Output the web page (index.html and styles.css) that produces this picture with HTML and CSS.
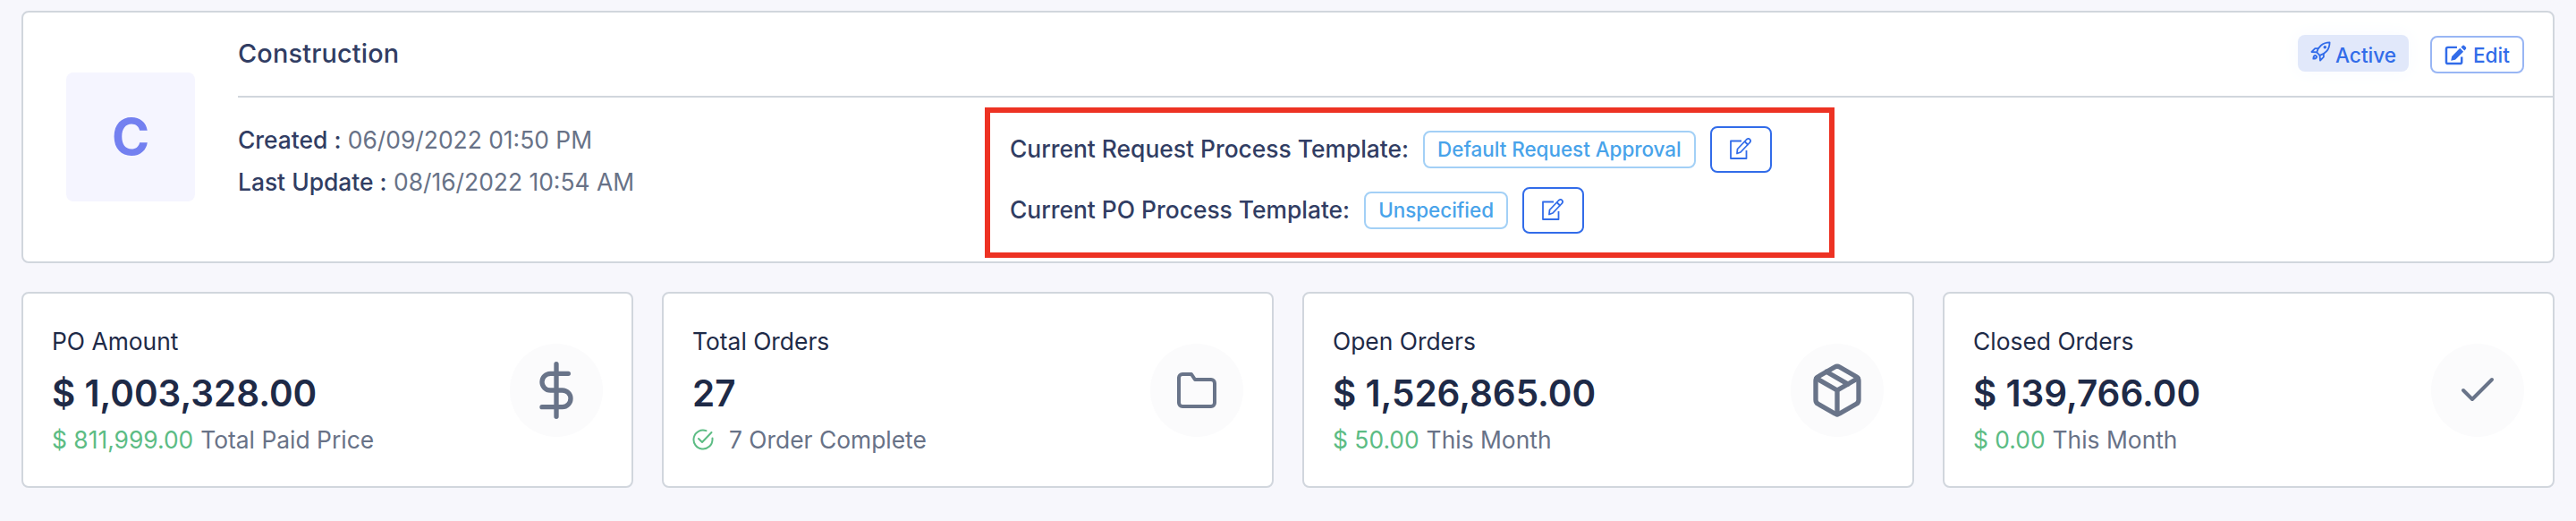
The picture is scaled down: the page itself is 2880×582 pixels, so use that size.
FILE: index.html
```html
<!DOCTYPE html>
<html lang="en">
<head>
  <meta charset="UTF-8" />
  <meta name="viewport" content="width=device-width, initial-scale=1.0"/>
  <title>Construction</title>
  <link rel="stylesheet" href="styles.css">
</head>
<body>
  <section class="card profile">
    <div class="avatar">C</div>
    <div class="profile-body">
      <header class="profile-header">
        <h1>Construction</h1>
        <div class="actions">
          <span class="status">
            <svg class="rocket" viewBox="0 0 24 24" fill="none" stroke="currentColor" stroke-width="1.9" stroke-linejoin="round" stroke-linecap="round">
              <path d="M7.500 13C9 7 14 1.500 22.500 1.500C22.500 10 17 15 11 16.500Z"/>
              <path d="M9 8.500H5.500L1.500 12.500L7.500 13"/>
              <path d="M15.500 15V18.500L11.500 22.500L11 16.500"/>
              <path d="M6 16.500C3.500 16.500 3.500 19 3.500 20.500C5 20.500 7.500 20.500 7.500 18Z"/>
              <circle cx="17" cy="7" r="0.9"/>
            </svg>
            Active
          </span>
          <button class="edit">
            <svg viewBox="0 0 26 24">
              <path d="M14.500 3H4A2 2 0 0 0 2 5V20A2 2 0 0 0 4 22H18A2 2 0 0 0 20 20V14" fill="none" stroke="currentColor" stroke-width="2.6"/>
              <path d="M18 4L22 8L12.500 17.500L7.500 18.500L8.500 13.500Z" fill="currentColor"/>
              <path d="M19.200 2.800L20.700 1.300Q22 0 23.300 1.300L24.700 2.700Q26 4 24.700 5.300L23.200 6.800Z" fill="currentColor"/>
            </svg>
            Edit
          </button>
        </div>
      </header>
      <div class="details">
        <div class="dates">
          <p><b>Created :</b> 06/09/2022 01:50 PM</p>
          <p><b>Last Update :</b> 08/16/2022 10:54 AM</p>
        </div>
        <div class="templates">
          <div class="template">
            <span class="label">Current Request Process Template:</span>
            <span class="tag">Default Request Approval</span>
            <button class="icon-btn">
              <svg viewBox="0 0 24 24" fill="none" stroke="currentColor" stroke-width="1.8" stroke-linejoin="round">
                <path d="M13 3.500H1V23H18.500V14"/>
                <path d="M18.500 2Q20.500 0 22.300 1.700Q24 3.500 22 5.500L12 16L8 17.500L8.500 12.500Z"/>
                <path d="M16.500 4L20.500 8"/>
              </svg>
            </button>
          </div>
          <div class="template">
            <span class="label">Current PO Process Template:</span>
            <span class="tag">Unspecified</span>
            <button class="icon-btn">
              <svg viewBox="0 0 24 24" fill="none" stroke="currentColor" stroke-width="1.8" stroke-linejoin="round">
                <path d="M13 3.500H1V23H18.500V14"/>
                <path d="M18.500 2Q20.500 0 22.300 1.700Q24 3.500 22 5.500L12 16L8 17.500L8.500 12.500Z"/>
                <path d="M16.500 4L20.500 8"/>
              </svg>
            </button>
          </div>
        </div>
      </div>
    </div>
  </section>

  <section class="stats">
    <div class="card stat">
      <div class="stat-text">
        <h2>PO Amount</h2>
        <p class="amount">$ 1,003,328.00</p>
        <p class="note"><span class="green">$ 811,999.00</span> Total Paid Price</p>
      </div>
      <div class="circle">
        <svg class="icon-lg" viewBox="0 0 24 24">
          <path d="M12 1V23M17 5H9.500A3.500 3.500 0 0 0 9.500 12H14.500A3.500 3.500 0 0 1 14.500 19H6"/>
        </svg>
      </div>
    </div>
    <div class="card stat">
      <div class="stat-text">
        <h2>Total Orders</h2>
        <p class="amount">27</p>
        <p class="note">
          <svg class="done" viewBox="0 0 24 24">
            <path d="M22.500 10.500V12A10.500 10.500 0 1 1 15.500 2.100"/>
            <path d="M21.500 4L11 15L7 11"/>
          </svg>
          7 Order Complete
        </p>
      </div>
      <div class="circle">
        <svg class="icon-md" viewBox="0 0 24 24">
          <path d="M22 19A2 2 0 0 1 20 21H4A2 2 0 0 1 2 19V5A2 2 0 0 1 4 3H9L11 6H20A2 2 0 0 1 22 8Z"/>
        </svg>
      </div>
    </div>
    <div class="card stat">
      <div class="stat-text">
        <h2>Open Orders</h2>
        <p class="amount">$ 1,526,865.00</p>
        <p class="note"><span class="green">$ 50.00</span> This Month</p>
      </div>
      <div class="circle">
        <svg class="icon-lg" viewBox="0 0 24 24">
          <path d="M16.500 9.400L7.500 4.210"/>
          <path d="M21 16V8A2 2 0 0 0 20 6.270L13 2.270A2 2 0 0 0 11 2.270L4 6.270A2 2 0 0 0 3 8V16A2 2 0 0 0 4 17.730L11 21.730A2 2 0 0 0 13 21.730L20 17.730A2 2 0 0 0 21 16Z"/>
          <path d="M3.270 6.960L12 12.010L20.730 6.960M12 22.080V12"/>
        </svg>
      </div>
    </div>
    <div class="card stat">
      <div class="stat-text">
        <h2>Closed Orders</h2>
        <p class="amount">$ 139,766.00</p>
        <p class="note"><span class="green">$ 0.00</span> This Month</p>
      </div>
      <div class="circle">
        <svg class="icon-md" viewBox="0 0 24 24">
          <path d="M20 6L9 17L4 12"/>
        </svg>
      </div>
    </div>
  </section>
</body>
</html>
```
FILE: styles.css
```css
* {
  box-sizing: border-box;
}
body {
  margin: 0;
  padding: 12px 24px;
  font-family: Inter, sans-serif;
  font-size: 26.4px;
  background: #f7f7fc;
  color: #687287;
}
h1, h2, p {
  margin: 0;
}
svg {
  display: block;
  flex: none;
}
button {
  font-family: inherit;
  background: white;
}
.card {
  background: white;
  border: 2px solid #d1d6dd;
  border-radius: 8px;
}

/* profile */
.profile {
  display: flex;
  height: 282px;
}
.avatar {
  flex: none;
  width: 144px;
  height: 144px;
  margin: 67px 48px 0;
  border-radius: 8px;
  background: #f5f5ff;
  color: #7380f0;
  font-size: 57px;
  font-weight: 700;
  line-height: 144px;
  text-align: center;
}
.profile-body {
  flex: 1;
}
.profile-header {
  display: flex;
  justify-content: space-between;
  height: 95px;
  padding-right: 32px;
  border-bottom: 2px solid #d1d6dd;
}
h1 {
  font-size: 28.8px;
  font-weight: 500;
  line-height: 92px;
  letter-spacing: 0.2px;
  color: #313d63;
}
.actions {
  display: flex;
  align-items: flex-start;
  gap: 24px;
  padding-top: 25px;
}
.status, .edit {
  display: flex;
  align-items: center;
  font-size: 22.6px;
  font-weight: 500;
  color: #326ce9;
  border-radius: 8px;
}
.status {
  width: 124px;
  height: 41px;
  padding: 3px 0 0 14px;
  gap: 5px;
  background: #e1e8fa;
  box-shadow: 0 0 20px 4px #fafcff;
}
.rocket {
  width: 23px;
  height: 23px;
  margin-top: -8px;
}
.edit {
  width: 105px;
  height: 42px;
  margin-top: 1px;
  padding: 0 0 0 14px;
  gap: 7px;
  border: 2px solid #99b6f4;
}
.edit svg {
  width: 25px;
  height: 23px;
}
.details {
  display: flex;
}
.dates {
  width: 835px;
  padding-top: 24px;
}
.dates p {
  line-height: 47px;
}
.dates b {
  font-weight: 500;
  color: #313d63;
}

/* process templates */
.templates {
  width: 950px;
  height: 168px;
  margin-top: 11px;
  padding: 15px 22px;
  border: 6px solid #ed3223;
}
.template {
  display: flex;
  align-items: center;
  gap: 16px;
  height: 52px;
  margin-bottom: 16px;
  font-weight: 500;
  color: #313d63;
}
.label {
  padding-bottom: 2px;
}
.tag {
  height: 42px;
  padding: 0 14px;
  border: 2px solid #a3d0f6;
  border-radius: 8px;
  font-size: 22.4px;
  line-height: 38px;
  color: #48a3ea;
}
.icon-btn {
  display: flex;
  align-items: center;
  justify-content: center;
  width: 69px;
  height: 52px;
  padding: 0 0 2px;
  border: 2px solid #326ce9;
  border-radius: 8px;
  color: #326ce9;
}
.icon-btn svg {
  width: 24px;
  height: 24px;
}

/* stats */
.stats {
  display: grid;
  grid-template-columns: repeat(4, 1fr);
  gap: 32px;
  margin-top: 32px;
}
.stat {
  display: flex;
  align-items: center;
  justify-content: space-between;
  height: 219px;
  padding: 0 32px;
}
.stat-text {
  padding-bottom: 5px;
}
h2 {
  margin-bottom: 3px;
  font-size: 26.4px;
  font-weight: 400;
  line-height: 52px;
  color: #1e2a47;
}
.amount {
  font-size: 40.4px;
  font-weight: 600;
  line-height: 60px;
  color: #1e2a47;
}
.note {
  display: flex;
  align-items: center;
  gap: 8px;
  line-height: 42px;
}
.green {
  color: #5cbc84;
}
.circle {
  display: flex;
  align-items: center;
  justify-content: center;
  width: 104px;
  height: 104px;
  border-radius: 50%;
  background: #fbfbfc;
}
.circle svg, .done {
  fill: none;
  stroke: #697489;
  stroke-width: 2;
  stroke-linecap: round;
  stroke-linejoin: round;
}
.icon-lg {
  width: 64px;
  height: 64px;
}
.icon-md {
  width: 48px;
  height: 48px;
}
.done {
  width: 24px;
  height: 24px;
  margin-right: 9px;
  stroke: #5cbc84;
}
```
